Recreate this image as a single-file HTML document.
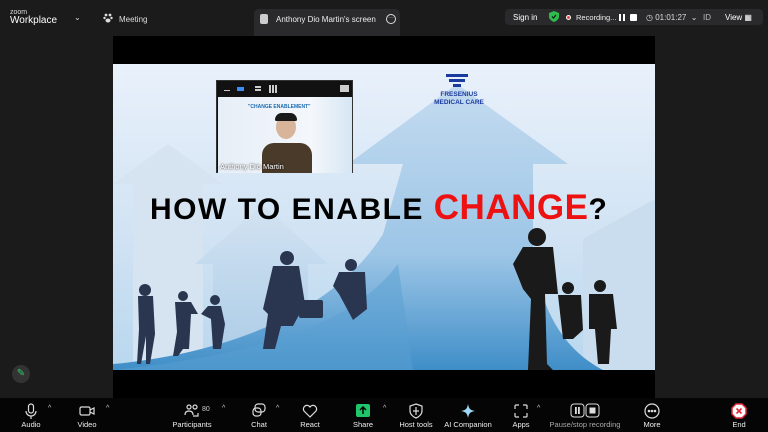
<!DOCTYPE html>
<html><head><meta charset="utf-8"><style>
*{margin:0;padding:0;box-sizing:border-box}
body{width:768px;height:432px;background:#1b1b1c;font-family:"Liberation Sans",sans-serif;color:#ddd;position:relative;overflow:hidden}
.abs{position:absolute}
.t{font-size:8px;color:#ddd}
.tb{position:absolute;left:0;top:398px;width:768px;height:34px;background:#050505}
.btn{position:absolute;top:0;width:60px;text-align:center}
.btn .lab{position:absolute;top:22px;left:0;width:100%;font-size:7.5px;color:#eee}
.btn svg{position:absolute;top:5px;left:50%;margin-left:-8px}
.car{position:absolute;top:7px;font-size:7px;color:#ccc}
</style></head><body>
<div class="abs" style="left:10px;top:9px;font-size:7px;color:#ddd;line-height:7px">zoom</div>
<div class="abs" style="left:10px;top:15px;font-size:10px;color:#fff">Workplace</div>
<div class="abs t" style="left:74px;top:13px">⌄</div>
<svg class="abs" style="left:103px;top:13px" width="10" height="10" viewBox="0 0 10 10"><circle cx="3" cy="2" r="1.4" fill="#ddd"/><circle cx="7" cy="2" r="1.4" fill="#ddd"/><circle cx="1.5" cy="5" r="1.2" fill="#ddd"/><circle cx="8.5" cy="5" r="1.2" fill="#ddd"/><ellipse cx="5" cy="7.5" rx="2.5" ry="2" fill="#ddd"/></svg>
<div class="abs t" style="left:119px;top:15px">Meeting</div>
<div class="abs" style="left:254px;top:9px;width:146px;height:27px;background:#2a2a2c;border-radius:5px 5px 0 0"></div>
<div class="abs" style="left:260px;top:14px;width:8px;height:10px;background:#ccc;border-radius:2px"></div>
<div class="abs t" style="left:276px;top:15px;color:#eee">Anthony Dio Martin's screen</div>
<div class="abs" style="left:386px;top:14px;width:10px;height:10px;border:1px solid #ddd;border-radius:50%;font-size:6px;line-height:6px;text-align:center">···</div>
<div class="abs" style="left:505px;top:9px;width:258px;height:16px;background:#2a2a2c;border-radius:4px"></div>
<div class="abs" style="left:513px;top:13px;font-size:8px;color:#fff">Sign in</div>
<svg class="abs" style="left:549px;top:11px" width="10" height="11" viewBox="0 0 10 11"><path d="M5 0L10 2V6C10 8 7.5 10 5 11C2.5 10 0 8 0 6V2Z" fill="#2dbb4e"/><path d="M3 5.5L4.5 7L7 4" stroke="#111" stroke-width="1.2" fill="none"/></svg>
<div class="abs" style="left:566px;top:15px;width:5px;height:5px;border-radius:50%;background:#e44;border:1px solid #fff"></div>
<div class="abs" style="left:576px;top:13px;font-size:7.5px;color:#eee">Recording...</div>
<div class="abs" style="left:619px;top:14px;width:2px;height:7px;background:#fff"></div>
<div class="abs" style="left:623px;top:14px;width:2px;height:7px;background:#fff"></div>
<div class="abs" style="left:630px;top:14px;width:7px;height:7px;background:#fff;border-radius:1px"></div>
<div class="abs t" style="left:646px;top:13px">◷ 01:01:27 &nbsp;⌄</div>
<div class="abs t" style="left:703px;top:13px;color:#bbb">ID</div>
<div class="abs t" style="left:725px;top:13px;color:#fff">View ▦</div>

<div class="abs" style="left:113px;top:36px;width:542px;height:362px;background:#000"></div>
<div class="abs" style="left:113px;top:64px;width:542px;height:306px;overflow:hidden;background:linear-gradient(#e9f1fb,#cfe2f3 60%,#b8d7ee)">
<svg width="542" height="306" viewBox="0 0 542 306" style="position:absolute;left:0;top:0">
 <defs><linearGradient id="g" x1="0" y1="0" x2="0" y2="1"><stop offset="0" stop-color="#c4dbf0"/><stop offset=".6" stop-color="#9cc5e6"/><stop offset="1" stop-color="#3f8ec8"/></linearGradient>
 <linearGradient id="g2" x1="0" y1="0" x2="0" y2="1"><stop offset="0" stop-color="#d3e3f2"/><stop offset="1" stop-color="#a9cbe6"/></linearGradient></defs>
 <path d="M0 120L55 80L110 120L90 120L90 306L20 306L20 120Z" fill="#d6e4f1"/>
 <path d="M82 200L150 140L215 200L195 200L195 306L100 306L100 200Z" fill="url(#g2)"/>
 <path d="M220 230L262 195L300 230Z" fill="#c6dbee"/>
 <path d="M470 175L542 135L542 306L470 306Z" fill="#c9ddef"/>
 <path d="M235 100L344 20L455 100L420 100L420 190C430 260 460 290 490 306L0 306L0 300C110 290 220 250 270 170L290 100Z" fill="url(#g)"/>
 <path d="M0 306C150 290 240 260 285 200L300 306Z" fill="#5a9fd1" opacity=".5"/>
 <g fill="#2a3550">
  <circle cx="32" cy="226" r="6"/><path d="M25 232H40L42 270L37 300H33L33 272L28 300H24L26 265Z"/>
  <circle cx="70" cy="232" r="5"/><path d="M62 238H78L85 250H78L76 285H70L65 292H60L64 268Z"/>
  <circle cx="102" cy="236" r="5"/><path d="M95 242H108L112 260L108 285H100L98 255L88 250Z"/>
  <circle cx="174" cy="194" r="7"/><path d="M160 202H186L192 240L180 262H168L162 285H150L155 250L150 245Z"/>
  <rect x="186" y="236" width="24" height="18" rx="2"/>
  <circle cx="238" cy="201" r="6"/><path d="M226 208H252L254 245L240 256L226 230L220 222Z"/>
 </g>
 <g fill="#1a1a1a">
  <circle cx="424" cy="173" r="9"/><path d="M410 183H440L445 230L432 230L434 300L440 306H415L418 235L410 225L400 200Z"/>
  <circle cx="455" cy="224" r="6"/><path d="M445 231H468L470 266L460 275H450Z"/>
  <circle cx="487" cy="222" r="6"/><path d="M476 230H500L504 265L498 265L496 300H485L482 265H476Z"/>
 </g>
</svg>
<div class="abs" style="left:333px;top:10px;width:22px;height:3px;background:#1a3aa0"></div>
<div class="abs" style="left:336px;top:15px;width:16px;height:3px;background:#1a3aa0"></div>
<div class="abs" style="left:340px;top:20px;width:8px;height:3px;background:#1a3aa0"></div>
<div class="abs" style="left:318px;top:27px;width:56px;text-align:center;font-size:6.5px;font-weight:bold;color:#1a3aa0;line-height:7.5px">FRESENIUS<br>MEDICAL CARE</div>
<div class="abs" style="left:37px;top:124px;font-size:30px;font-weight:900;color:#000;letter-spacing:1.5px;white-space:nowrap;line-height:40px">HOW TO ENABLE <span style="color:#ee1111;font-size:35px;letter-spacing:.5px">CHANGE</span>?</div>
</div>
<div class="abs" style="left:216px;top:80px;width:137px;height:93px;background:#111;border:1px solid #333">
 <div class="abs" style="left:7px;top:9px;width:6px;height:1px;background:#ccc"></div>
 <div class="abs" style="left:20px;top:6px;width:7px;height:4px;background:#3b8ff5"></div>
 <div class="abs" style="left:38px;top:5px;width:6px;height:5px;border-top:2px solid #ccc;border-bottom:2px solid #ccc"></div>
 <div class="abs" style="left:52px;top:4px;width:8px;height:8px;background:repeating-linear-gradient(90deg,#ccc 0 2px,transparent 2px 3px)"></div>
 <div class="abs" style="left:123px;top:4px;width:9px;height:7px;background:#ccc"></div>
 <div class="abs" style="left:1px;top:16px;width:134px;height:76px;background:linear-gradient(90deg,#e6eef7,#f4f7fb 70%,#d6e6f4)">
  <div class="abs" style="left:30px;top:7px;font-size:5px;color:#1a6ab0;font-weight:bold">"CHANGE ENABLEMENT"</div>
  <div class="abs" style="left:58px;top:18px;width:20px;height:24px;border-radius:50%;background:#d7b49a"></div>
  <div class="abs" style="left:57px;top:16px;width:22px;height:8px;border-radius:10px 10px 2px 2px;background:#1a1a1a"></div>
  <div class="abs" style="left:44px;top:46px;width:50px;height:30px;border-radius:12px 12px 0 0;background:#4a3a2a"></div>
  <div class="abs" style="left:2px;top:65px;font-size:7.5px;color:#fff;text-shadow:0 0 2px #000">Anthony Dio Martin</div>
 </div>
</div>
<div class="abs" style="left:12px;top:365px;width:18px;height:18px;border-radius:50%;background:#333;color:#3c6;font-size:10px;text-align:center;line-height:18px">✎</div>

<div class="tb">
 <div class="btn" style="left:1px"><svg width="16" height="16" viewBox="0 0 16 16" fill="none" stroke="#ddd" stroke-width="1.2"><rect x="5.5" y="1" width="5" height="9" rx="2.5"/><path d="M3 8a5 5 0 0 0 10 0M8 13v3"/></svg><div class="lab">Audio</div></div>
 <div class="car" style="left:48px">^</div>
 <div class="btn" style="left:57px"><svg width="16" height="16" viewBox="0 0 16 16" fill="none" stroke="#ddd" stroke-width="1.2"><rect x="1" y="4" width="10" height="8" rx="1.5"/><path d="M11 7l4-2v6l-4-2"/></svg><div class="lab">Video</div></div>
 <div class="car" style="left:106px">^</div>
 <div class="btn" style="left:162px"><svg width="16" height="16" viewBox="0 0 16 16" fill="none" stroke="#ddd" stroke-width="1.2"><circle cx="5" cy="4" r="2"/><circle cx="11" cy="4" r="2"/><path d="M1 12c0-3 2-4 4-4s4 1 4 4M9 13h5v-3"/></svg><div class="lab">Participants</div></div>
 <div class="abs" style="left:202px;top:8px;font-size:7px;color:#ccc">80</div>
 <div class="car" style="left:222px">^</div>
 <div class="btn" style="left:229px"><svg width="16" height="16" viewBox="0 0 16 16" fill="none" stroke="#ddd" stroke-width="1.2"><rect x="4" y="1" width="10" height="8" rx="3"/><rect x="2" y="5" width="8" height="8" rx="3"/></svg><div class="lab">Chat</div></div>
 <div class="car" style="left:276px">^</div>
 <div class="btn" style="left:280px"><svg width="16" height="16" viewBox="0 0 16 16" fill="none" stroke="#ddd" stroke-width="1.2"><path d="M8 14L2 8a3.5 3.5 0 0 1 6-4a3.5 3.5 0 0 1 6 4Z"/></svg><div class="lab">React</div></div>
 <div class="btn" style="left:333px"><svg width="16" height="16" viewBox="0 0 16 16"><rect x="1" y="1" width="14" height="13" rx="2" fill="#1fc76a"/><path d="M8 11V4M5 7l3-3 3 3" stroke="#000" stroke-width="1.5" fill="none"/></svg><div class="lab">Share</div></div>
 <div class="car" style="left:383px">^</div>
 <div class="btn" style="left:386px"><svg width="16" height="16" viewBox="0 0 16 16" fill="none" stroke="#ddd" stroke-width="1.2"><path d="M8 1L14 3V8C14 11 11 14 8 15C5 14 2 11 2 8V3Z"/><path d="M8 4v8M5 8h6" /></svg><div class="lab">Host tools</div></div>
 <div class="btn" style="left:438px"><svg width="16" height="16" viewBox="0 0 16 16"><path d="M8 1C9 6 10 7 15 8C10 9 9 10 8 15C7 10 6 9 1 8C6 7 7 6 8 1Z" fill="#9fd8f5"/></svg><div class="lab">AI Companion</div></div>
 <div class="btn" style="left:491px"><svg width="16" height="16" viewBox="0 0 16 16" fill="none" stroke="#ddd" stroke-width="1.2"><path d="M2 6V3a1 1 0 0 1 1-1h3M10 2h3a1 1 0 0 1 1 1v3M14 10v3a1 1 0 0 1-1 1h-3M6 14H3a1 1 0 0 1-1-1v-3"/></svg><div class="lab">Apps</div></div>
 <div class="car" style="left:537px">^</div>
 <div class="btn" style="left:555px;width:60px"><svg width="30" height="16" viewBox="0 0 30 16" style="margin-left:-15px"><rect x="1" y="1" width="13" height="13" rx="3" fill="none" stroke="#ddd"/><rect x="5" y="4" width="1.8" height="7" fill="#ddd"/><rect x="8" y="4" width="1.8" height="7" fill="#ddd"/><rect x="16" y="1" width="13" height="13" rx="3" fill="none" stroke="#ddd"/><rect x="19.5" y="4.5" width="6" height="6" fill="#ddd"/></svg><div class="lab" style="color:#aaa;left:-10px;width:80px">Pause/stop recording</div></div>
 <div class="btn" style="left:622px"><svg width="16" height="16" viewBox="0 0 16 16" fill="none" stroke="#ddd" stroke-width="1.2"><circle cx="8" cy="8" r="7"/><circle cx="5" cy="8" r=".7" fill="#ddd"/><circle cx="8" cy="8" r=".7" fill="#ddd"/><circle cx="11" cy="8" r=".7" fill="#ddd"/></svg><div class="lab">More</div></div>
 <div class="btn" style="left:709px"><svg width="16" height="16" viewBox="0 0 16 16"><path d="M5 1H11L15 5V11L11 15H5L1 11V5Z" fill="#fff" stroke="#e02a3a" stroke-width="1.5"/><path d="M5.5 5.5l5 5M10.5 5.5l-5 5" stroke="#e02a3a" stroke-width="1.6"/></svg><div class="lab">End</div></div>
</div>
</body></html>
